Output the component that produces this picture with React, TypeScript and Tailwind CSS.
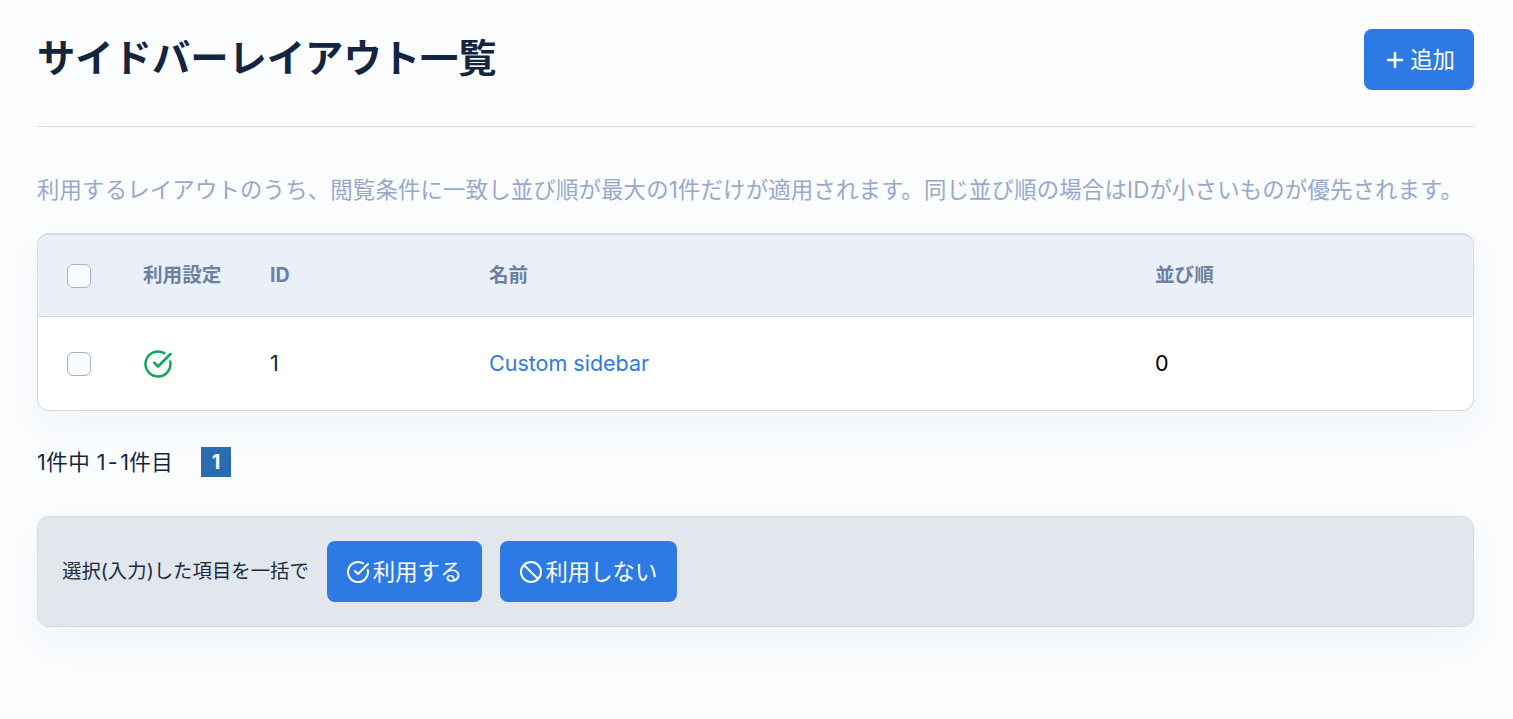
import { CircleCheckBig, Ban, Plus } from "lucide-react";

const font = "font-['Inter','Noto_Sans_CJK_JP',sans-serif]";

function Checkbox() {
  return <div className="h-6 w-6 rounded-md border border-[#a0b3d1] bg-[#f9fbfe]" />;
}

function BlueButton({ icon, label, gap }: { icon: React.ReactNode; label: string; gap: string }) {
  return (
    <button className={`flex h-[61px] items-center rounded-lg bg-[#2d7ae5] pl-[19px] pr-5 text-[22.4px] text-white ${gap}`}>
      {icon}
      {label}
    </button>
  );
}

export default function App() {
  return (
    <div className={`${font} min-h-[719px] bg-[#fafcfe] pl-[37px] pr-[39px] pt-[29px] text-[#1a2b42]`}>
      <div className="flex items-start justify-between border-b border-[#cfdfee] pb-9">
        <h1 className="text-[38.3px] font-bold leading-[58px] text-[#14263f]">サイドバーレイアウト一覧</h1>
        <button className="flex h-[61px] items-center gap-[3px] rounded-lg bg-[#2d7ae5] pl-[19px] pr-[19px] text-[22.4px] text-white">
          <Plus className="h-6 w-6" strokeWidth={2.5} />
          追加
        </button>
      </div>

      <p className="mt-[47px] text-[22.4px] leading-[32px] tracking-[0.17px] text-[#97a9c9]">
        利用するレイアウトのうち、閲覧条件に一致し並び順が最大の1件だけが適用されます。同じ並び順の場合はIDが小さいものが優先されます。
      </p>

      <div className="mt-[27px] overflow-hidden rounded-xl border border-t-2 border-[#cfdbe8] bg-white shadow-[0_16px_36px_rgba(60,90,130,0.04)]">
        <div className="flex h-[82px] items-center border-b border-[#cfdbe8] bg-[#ebf0f8] text-[19.6px] font-bold text-[#6c81a0]">
          <div className="w-[105px] pl-[29px]">
            <Checkbox />
          </div>
          <div className="w-[127px]">利用設定</div>
          <div className="w-[219px]">ID</div>
          <div className="w-[666px]">名前</div>
          <div>並び順</div>
        </div>
        <div className="flex h-[93px] items-center text-[21.5px] text-[#14263f]">
          <div className="w-[105px] pl-[29px]">
            <Checkbox />
          </div>
          <div className="w-[127px]">
            <CircleCheckBig className="h-[30px] w-[30px] text-[#0aa85a]" strokeWidth={2} />
          </div>
          <div className="w-[219px]">1</div>
          <div className="w-[666px] text-[#2d7ae5]">Custom sidebar</div>
          <div className="text-black">0</div>
        </div>
      </div>

      <div className="mt-9 flex h-[30px] items-center text-[21.6px] leading-[30px] tracking-[0.4px] text-[#14263f]">
        <span>
          1件中 1<span className="mx-[2px]">-</span>1件目
        </span>
        <span className="ml-7 flex h-[30px] w-[30px] items-center justify-center bg-[#2b6cb0] text-xl font-bold text-white">1</span>
      </div>

      <div className="mt-[39px] flex h-[111px] items-center gap-[18px] rounded-xl border border-[#cfdbe8] bg-[#e2e7ee] pl-6 shadow-[0_16px_36px_rgba(60,90,130,0.04)]">
        <span className="text-[19.4px]">選択(入力)した項目を一括で</span>
        <BlueButton gap="gap-[3px]" icon={<CircleCheckBig className="h-6 w-6" strokeWidth={2} />} label="利用する" />
        <BlueButton gap="gap-[2px]" icon={<Ban className="h-6 w-6" strokeWidth={2} />} label="利用しない" />
      </div>
    </div>
  );
}
